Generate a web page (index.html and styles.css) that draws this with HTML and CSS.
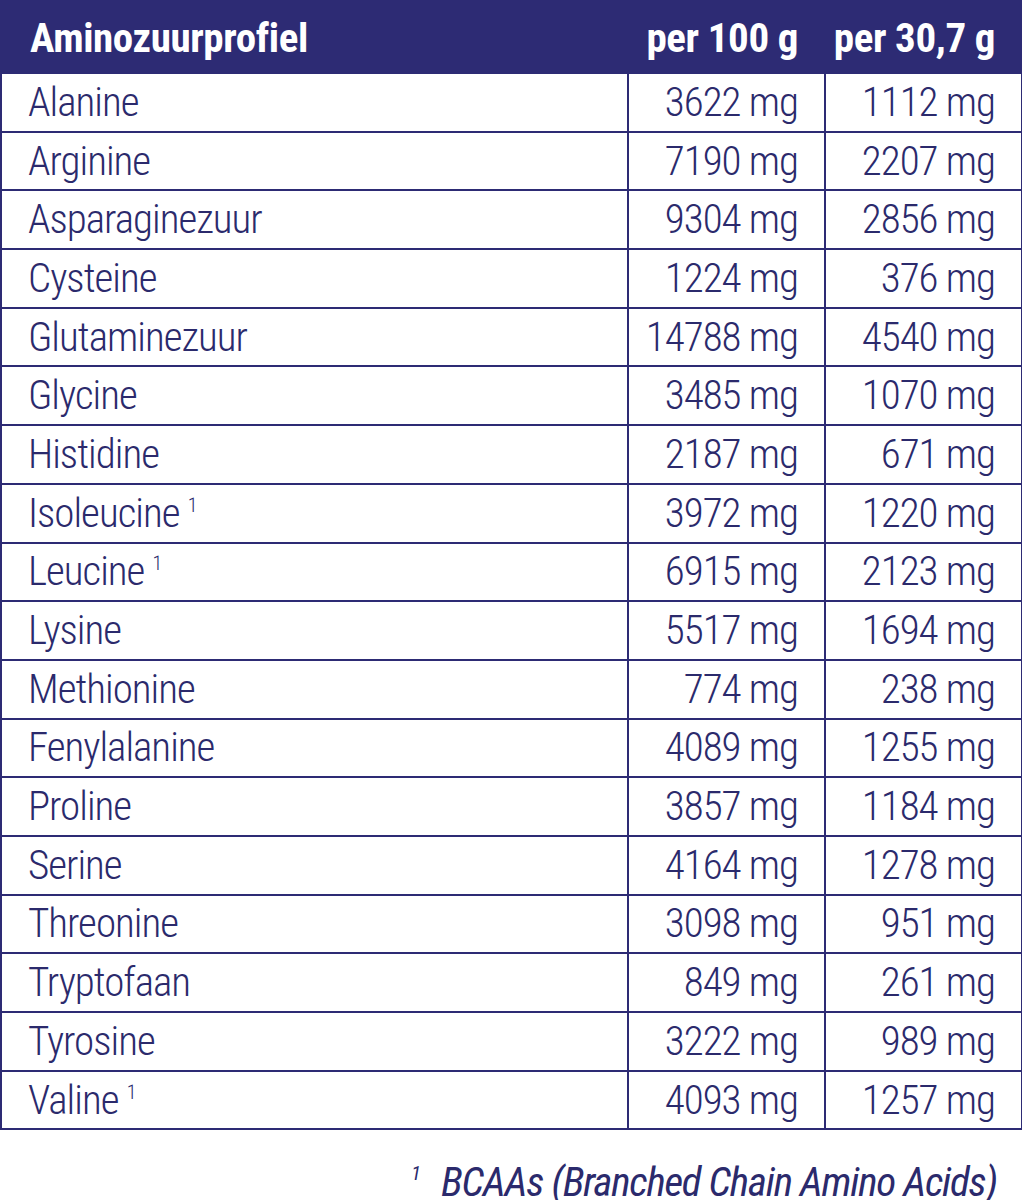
FILE: index.html
```html
<!DOCTYPE html>
<html lang="nl">
<head>
<meta charset="utf-8">
<title>Aminozuurprofiel</title>
<link rel="stylesheet" href="styles.css">
</head>
<body>
<table class="amino">
  <colgroup>
    <col class="c-name">
    <col class="c-val">
    <col class="c-val2">
  </colgroup>
  <thead>
    <tr><th class="name">Aminozuurprofiel</th><th class="val">per 100 g</th><th class="val">per 30,7 g</th></tr>
  </thead>
  <tbody>
    <tr><td class="name">Alanine</td><td class="val">3622 mg</td><td class="val">1112 mg</td></tr>
    <tr><td class="name">Arginine</td><td class="val">7190 mg</td><td class="val">2207 mg</td></tr>
    <tr><td class="name">Asparaginezuur</td><td class="val">9304 mg</td><td class="val">2856 mg</td></tr>
    <tr><td class="name">Cysteine</td><td class="val">1224 mg</td><td class="val">376 mg</td></tr>
    <tr><td class="name">Glutaminezuur</td><td class="val">14788 mg</td><td class="val">4540 mg</td></tr>
    <tr><td class="name">Glycine</td><td class="val">3485 mg</td><td class="val">1070 mg</td></tr>
    <tr><td class="name">Histidine</td><td class="val">2187 mg</td><td class="val">671 mg</td></tr>
    <tr><td class="name">Isoleucine <sup>1</sup></td><td class="val">3972 mg</td><td class="val">1220 mg</td></tr>
    <tr><td class="name">Leucine <sup>1</sup></td><td class="val">6915 mg</td><td class="val">2123 mg</td></tr>
    <tr><td class="name">Lysine</td><td class="val">5517 mg</td><td class="val">1694 mg</td></tr>
    <tr><td class="name">Methionine</td><td class="val">774 mg</td><td class="val">238 mg</td></tr>
    <tr><td class="name">Fenylalanine</td><td class="val">4089 mg</td><td class="val">1255 mg</td></tr>
    <tr><td class="name">Proline</td><td class="val">3857 mg</td><td class="val">1184 mg</td></tr>
    <tr><td class="name">Serine</td><td class="val">4164 mg</td><td class="val">1278 mg</td></tr>
    <tr><td class="name">Threonine</td><td class="val">3098 mg</td><td class="val">951 mg</td></tr>
    <tr><td class="name">Tryptofaan</td><td class="val">849 mg</td><td class="val">261 mg</td></tr>
    <tr><td class="name">Tyrosine</td><td class="val">3222 mg</td><td class="val">989 mg</td></tr>
    <tr><td class="name">Valine <sup>1</sup></td><td class="val">4093 mg</td><td class="val">1257 mg</td></tr>
  </tbody>
</table>
<p class="note"><sup>1</sup> BCAAs (Branched Chain Amino Acids)</p>
</body>
</html>
```

FILE: styles.css
```css
html, body {
  margin: 0;
  padding: 0;
  background: #ffffff;
}
body {
  width: 1022px;
  font-family: "Roboto Condensed", "Liberation Sans Narrow", "DejaVu Sans Condensed", "Liberation Sans", sans-serif;
  color: #2b2a6c;
}
.amino {
  width: 1021px;
  border-collapse: collapse;
  table-layout: fixed;
  margin: 0;
}
.c-name { width: 627px; }
.c-val { width: 197px; }
.c-val2 { width: 197px; }
.amino th {
  background: #2d2b74;
  color: #ffffff;
  font-weight: 700;
  font-size: 41px;
  letter-spacing: -0.4px;
  height: 72px;
  padding: 2px 26px 0 28px;
  border: 2px solid #2d2b74;
  box-sizing: border-box;
  white-space: nowrap;
  line-height: 1;
}
.amino th.val {
  padding-left: 0;
}
.amino td {
  font-weight: 300;
  font-size: 41px;
  letter-spacing: -1px;
  height: 58.7px;
  padding: 0 26px 0 26px;
  border: 2px solid #2d2b74;
  box-sizing: border-box;
  line-height: 1;
  white-space: nowrap;
}
.amino td.val {
  padding-left: 0;
}
.name { text-align: left; }
.val { text-align: right; }
.amino sup {
  font-size: 20px;
  letter-spacing: 0;
  vertical-align: 15px;
  line-height: 0;
}
.note {
  margin: 32px 25px 0 0;
  text-align: right;
  font-style: italic;
  font-size: 41px;
  letter-spacing: -1.2px;
  font-weight: 400;
  line-height: 1;
  white-space: nowrap;
}
.note sup {
  font-size: 20px;
  letter-spacing: 0;
  vertical-align: 16px;
  line-height: 0;
  margin-right: 12px;
}
```
